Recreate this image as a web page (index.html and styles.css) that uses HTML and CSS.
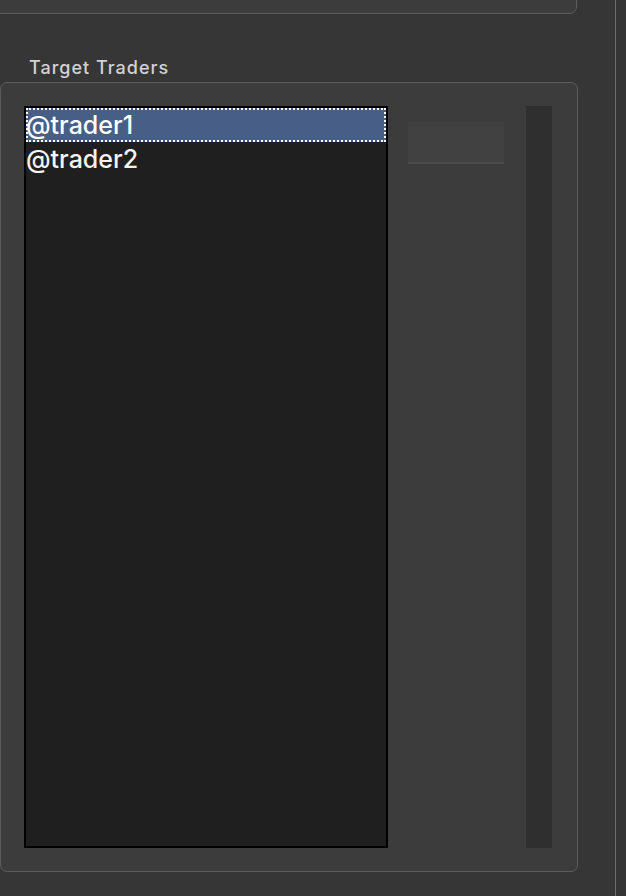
FILE: index.html
```html
<!DOCTYPE html>
<html>
<head>
<meta charset="utf-8">
<link rel="stylesheet" href="styles.css">
</head>
<body>
<div class="page">
  <div class="main">
    <div class="top-box"></div>
    <div class="group-label">Target Traders</div>
    <div class="group-box">
      <div class="list">
        <div class="row selected">@trader1</div>
        <div class="row">@trader2</div>
      </div>
      <div class="button"></div>
      <div class="track"></div>
    </div>
  </div>
  <div class="divider"></div>
  <div class="side"></div>
</div>
</body>
</html>
```
FILE: styles.css
```css
html, body {
  margin: 0;
  padding: 0;
  background: #363636;
  overflow: hidden;
}
.page {
  display: flex;
  width: 626px;
  height: 896px;
}
.main {
  width: 578px;
  display: flex;
  flex-direction: column;
}
.top-box {
  height: 33px;
  margin-top: -19px;
  margin-left: -12px;
  width: 589px;
  box-sizing: border-box;
  background: #3c3c3c;
  border: 1px solid #5c5c5c;
  border-radius: 7px;
}
.group-label {
  margin: 43px 0 0 29px;
  height: 25px;
  font-family: Inter, "Liberation Sans", sans-serif;
  font-size: 18px;
  font-weight: 500;
  letter-spacing: 1px;
  line-height: 22px;
  color: #d2d2d2;
}
.group-box {
  box-sizing: border-box;
  width: 578px;
  height: 790px;
  background: #3c3c3c;
  border: 1px solid #5c5c5c;
  border-radius: 7px;
  padding: 23px 24px 0 23px;
  display: flex;
  align-items: flex-start;
}
.list {
  box-sizing: border-box;
  width: 364px;
  height: 742px;
  background: #1f1f1f;
  border: 2px solid #000;
  font-family: Inter, "Liberation Sans", sans-serif;
  font-size: 25px;
  font-weight: 500;
  color: #f4f4f4;
}
.row {
  box-sizing: border-box;
  height: 34px;
  line-height: 30px;
  text-indent: -2px;
  border: 2px solid transparent;
  white-space: nowrap;
}
.row.selected {
  background: #475f86;
  border: 2px dotted #ffffff;
  color: #ffffff;
}
.button {
  width: 96px;
  height: 42px;
  box-sizing: border-box;
  margin: 16px 0 0 20px;
  background: #414141;
  border-bottom: 2px solid #4a4a4a;
}
.track {
  width: 26px;
  height: 742px;
  margin-left: 22px;
  background: #2f2f2f;
}
.divider {
  width: 1px;
  height: 896px;
  margin-left: 37px;
  background: #6a6a6a;
}
.side {
  flex: 1;
  background: #353535;
}
```
